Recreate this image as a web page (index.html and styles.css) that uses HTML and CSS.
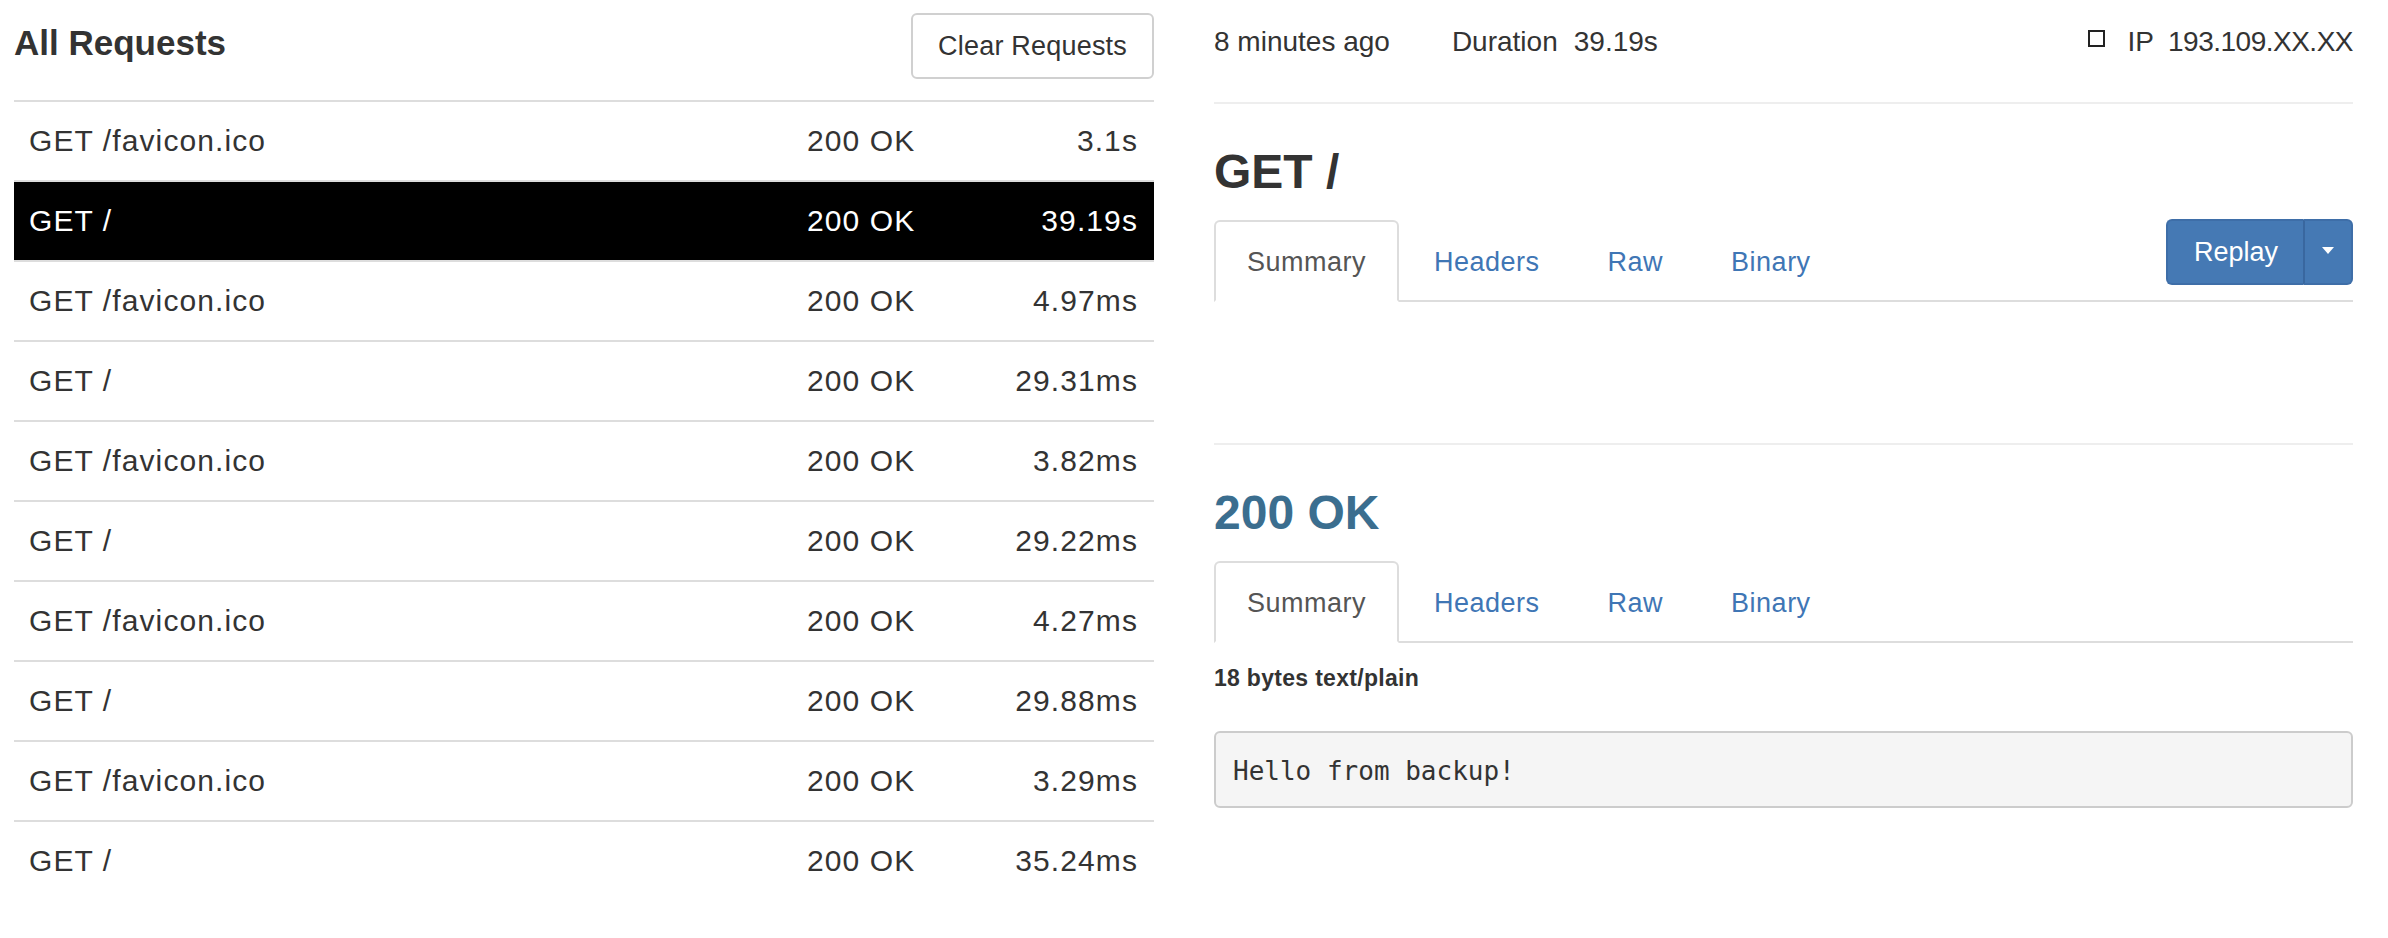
FILE: index.html
```html
<!DOCTYPE html>
<html>
<head>
<meta charset="utf-8">
<title>Requests</title>
<link rel="stylesheet" href="styles.css">
</head>
<body>
<div class="page">
  <section class="list">
    <div class="list-header">
      <h3 class="list-title">All Requests</h3>
      <button class="btn-default">Clear Requests</button>
    </div>
    <div class="table">
      <div class="row"><span class="c-req">GET /favicon.ico</span><span class="c-status">200 OK</span><span class="c-dur">3.1s</span></div>
      <div class="row active"><span class="c-req">GET /</span><span class="c-status">200 OK</span><span class="c-dur">39.19s</span></div>
      <div class="row"><span class="c-req">GET /favicon.ico</span><span class="c-status">200 OK</span><span class="c-dur">4.97ms</span></div>
      <div class="row"><span class="c-req">GET /</span><span class="c-status">200 OK</span><span class="c-dur">29.31ms</span></div>
      <div class="row"><span class="c-req">GET /favicon.ico</span><span class="c-status">200 OK</span><span class="c-dur">3.82ms</span></div>
      <div class="row"><span class="c-req">GET /</span><span class="c-status">200 OK</span><span class="c-dur">29.22ms</span></div>
      <div class="row"><span class="c-req">GET /favicon.ico</span><span class="c-status">200 OK</span><span class="c-dur">4.27ms</span></div>
      <div class="row"><span class="c-req">GET /</span><span class="c-status">200 OK</span><span class="c-dur">29.88ms</span></div>
      <div class="row"><span class="c-req">GET /favicon.ico</span><span class="c-status">200 OK</span><span class="c-dur">3.29ms</span></div>
      <div class="row"><span class="c-req">GET /</span><span class="c-status">200 OK</span><span class="c-dur">35.24ms</span></div>
    </div>
  </section>

  <section class="detail">
    <div class="meta">
      <span class="ago">8 minutes ago</span>
      <span class="meta-label">Duration</span><span>39.19s</span>
      <span class="meta-right"><span class="box"></span><span class="ip-label">IP</span><span class="ip-value">193.109.XX.XX</span></span>
    </div>

    <h2 class="title">GET /</h2>
    <div class="tabs-row">
      <ul class="tabs">
        <li class="tab active">Summary</li>
        <li class="tab">Headers</li>
        <li class="tab">Raw</li>
        <li class="tab">Binary</li>
      </ul>
      <div class="btn-group">
        <button class="btn-primary">Replay</button>
        <button class="btn-caret"><span class="caret"></span></button>
      </div>
    </div>

    <hr class="sep">

    <h2 class="title info">200 OK</h2>
    <div class="tabs-row">
      <ul class="tabs">
        <li class="tab active">Summary</li>
        <li class="tab">Headers</li>
        <li class="tab">Raw</li>
        <li class="tab">Binary</li>
      </ul>
    </div>
    <p class="size">18 bytes text/plain</p>
    <pre class="body">Hello from backup!</pre>
  </section>
</div>
</body>
</html>
```

FILE: styles.css
```css
* { box-sizing: border-box; }

body {
  margin: 0;
  background: #fff;
  color: #333;
  font-family: "Liberation Sans", Arial, sans-serif;
}

.page {
  display: flex;
  gap: 60px;
  padding-left: 14px;
}

/* ---------- left list ---------- */
.list { width: 1140px; flex: none; }

.list-header {
  display: flex;
  justify-content: space-between;
  align-items: flex-start;
  height: 100px;
  padding-top: 13px;
}

.list-title {
  margin: 12px 0 0;
  font-size: 35px;
  line-height: 35px;
  font-weight: bold;
}

.btn-default {
  height: 66px;
  padding: 0 25px;
  border: 2px solid #d0d0d0;
  border-radius: 6px;
  background: #fff;
  color: #333;
  font-family: "Liberation Sans", Arial, sans-serif;
  font-size: 27px;
  letter-spacing: 0.2px;
}

.row {
  display: grid;
  grid-template-columns: 1fr 181px 150px;
  align-items: center;
  height: 80px;
  padding: 0 16px 0 15px;
  border-top: 2px solid #ddd;
  font-size: 30px;
  line-height: 36px;
  letter-spacing: 1.1px;
}

.row.active { background: #000; color: #fff; }

.c-dur { text-align: right; }

/* ---------- right detail ---------- */
.detail { width: 1139px; flex: none; }

.meta {
  display: flex;
  align-items: center;
  height: 104px;
  padding-bottom: 18px;
  border-bottom: 2px solid #eee;
  font-size: 28px;
}

.ago { margin-right: 62px; }
.meta-label { margin-right: 16px; }

.meta-right {
  margin-left: auto;
  display: flex;
  align-items: center;
}

.box {
  width: 17px;
  height: 17px;
  border: 2px solid #222;
  margin: 0 23px 8px 0;
}

.ip-label { margin-right: 14px; }
.ip-value { letter-spacing: -0.5px; }

.title {
  margin: 44px 0 24px;
  font-size: 48px;
  line-height: 48px;
  font-weight: bold;
}

.title.info { color: #3b6e8f; }

.tabs-row {
  display: flex;
  align-items: flex-start;
  border-bottom: 2px solid #ddd;
}

.tabs {
  display: flex;
  list-style: none;
  margin: 0 0 -2px;
  padding: 0;
}

.tab {
  height: 82px;
  display: flex;
  align-items: center;
  padding: 2px 31px 0;
  margin-right: 2px;
  border: 2px solid transparent;
  border-radius: 6px 6px 0 0;
  font-size: 27px;
  letter-spacing: 0.5px;
  color: #3f76b5;
}

.tab.active {
  border-color: #ddd #ddd transparent;
  background: #fff;
  color: #555;
}

.btn-group {
  display: flex;
  margin: -1px 0 0 auto;
}

.btn-primary,
.btn-caret {
  height: 66px;
  background: #4579b4;
  color: #fff;
  border: 2px solid #3e6ea8;
  font-family: "Liberation Sans", Arial, sans-serif;
  font-size: 27px;
}

.btn-primary {
  padding: 0 25px 0 26px;
  border-right: none;
  border-radius: 6px 0 0 6px;
}

.btn-caret {
  width: 50px;
  padding: 0;
  border-left: 2px solid #39679f;
  border-radius: 0 6px 6px 0;
  display: flex;
  align-items: center;
  justify-content: center;
}

.caret {
  width: 0;
  height: 0;
  border-left: 6px solid transparent;
  border-right: 6px solid transparent;
  border-top: 7px solid #fff;
  margin-bottom: 3px;
}

.sep {
  margin: 141px 0 0;
  height: 0;
  border: 0;
  border-top: 2px solid #eee;
}

.size {
  margin: 24px 0 0;
  font-size: 23px;
  line-height: 23px;
  font-weight: bold;
  letter-spacing: 0.3px;
}

.body {
  margin: 41px 0 0;
  height: 77px;
  padding: 2px 17px 0;
  display: flex;
  align-items: center;
  background: #f5f5f5;
  border: 2px solid #ccc;
  border-radius: 6px;
  font-family: "DejaVu Sans Mono", "Liberation Mono", monospace;
  font-size: 26px;
  color: #333;
}
```
